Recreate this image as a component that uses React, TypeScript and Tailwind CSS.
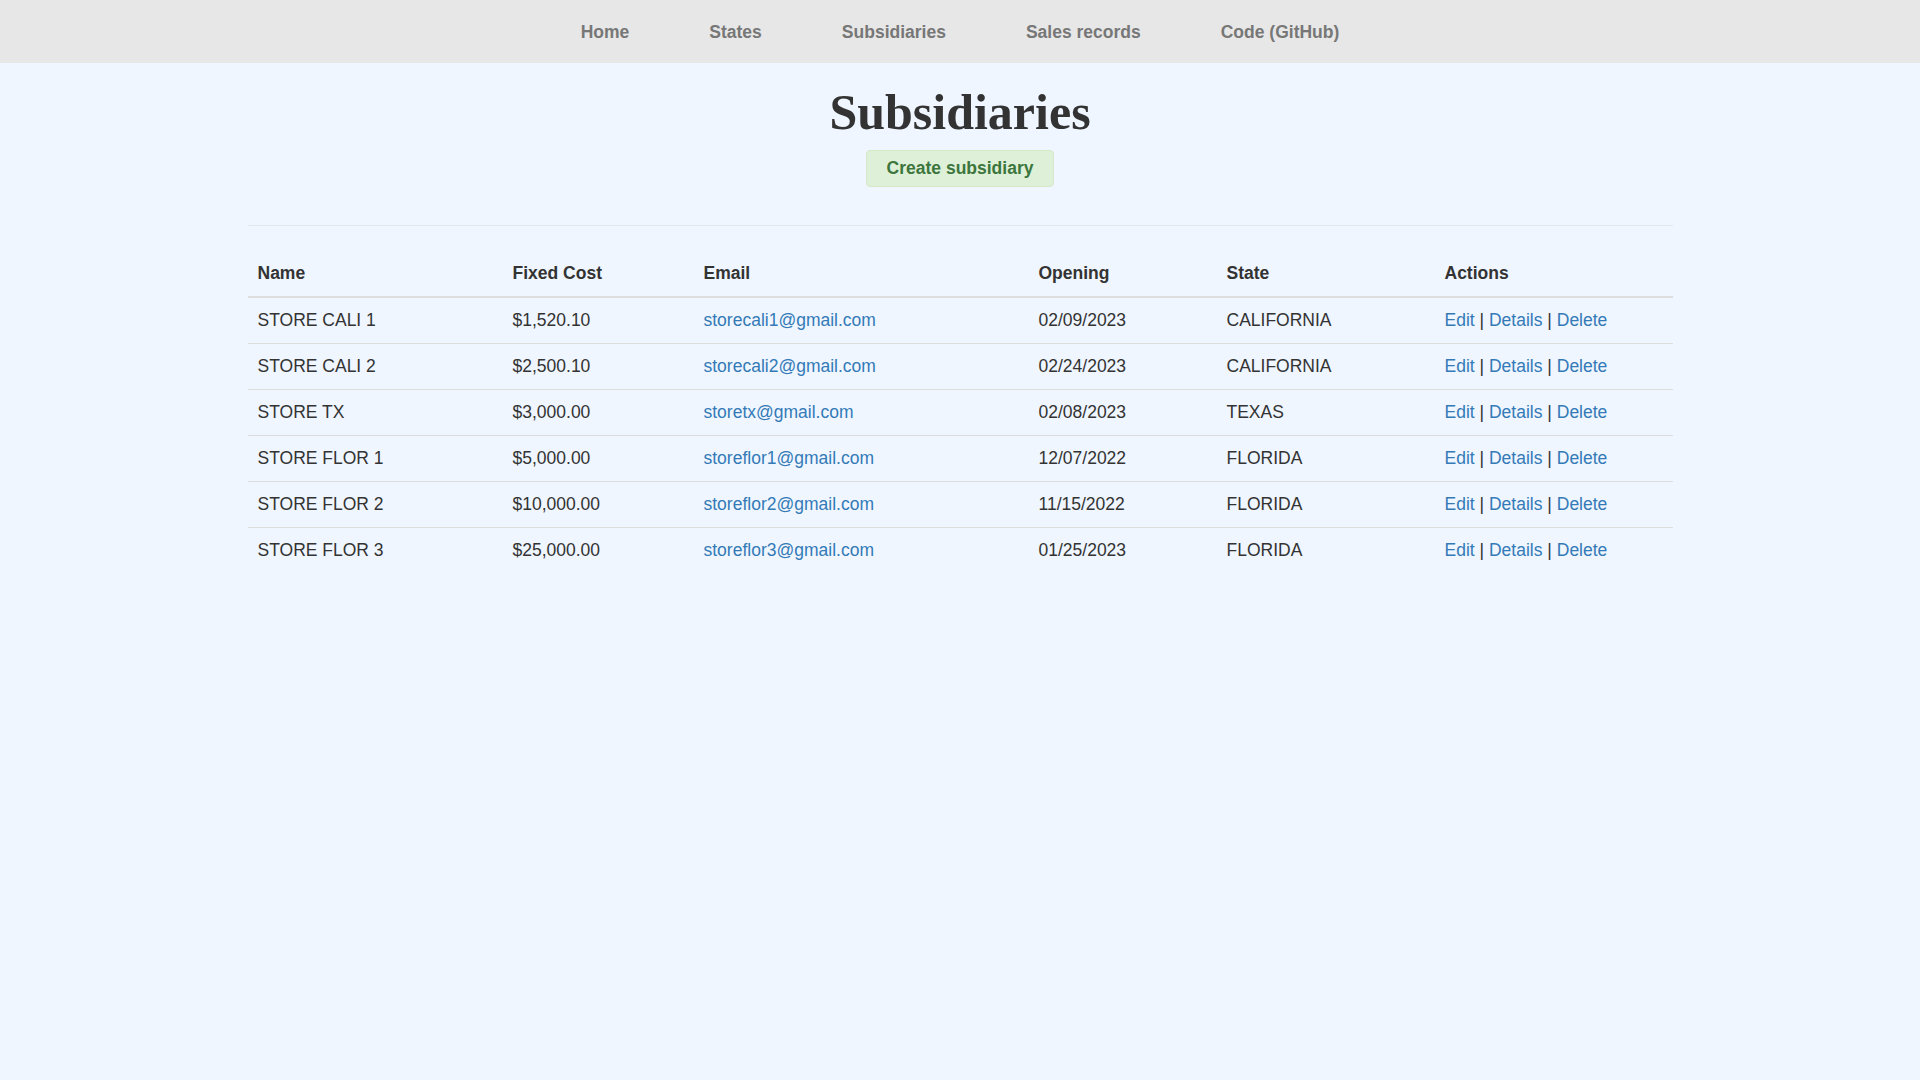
import React from 'react';

const navItems = ['Home', 'States', 'Subsidiaries', 'Sales records', 'Code (GitHub)'];

const rows = [
  { name: 'STORE CALI 1', cost: '$1,520.10', email: 'storecali1@gmail.com', opening: '02/09/2023', state: 'CALIFORNIA' },
  { name: 'STORE CALI 2', cost: '$2,500.10', email: 'storecali2@gmail.com', opening: '02/24/2023', state: 'CALIFORNIA' },
  { name: 'STORE TX', cost: '$3,000.00', email: 'storetx@gmail.com', opening: '02/08/2023', state: 'TEXAS' },
  { name: 'STORE FLOR 1', cost: '$5,000.00', email: 'storeflor1@gmail.com', opening: '12/07/2022', state: 'FLORIDA' },
  { name: 'STORE FLOR 2', cost: '$10,000.00', email: 'storeflor2@gmail.com', opening: '11/15/2022', state: 'FLORIDA' },
  { name: 'STORE FLOR 3', cost: '$25,000.00', email: 'storeflor3@gmail.com', opening: '01/25/2023', state: 'FLORIDA' },
];

const App = () => {
  return (
    <div className="min-h-screen bg-[#eff6ff] font-['Liberation_Sans',Arial,sans-serif] text-[#333]">
      <nav className="h-[63px] bg-[#e7e7e7] flex items-center justify-center">
        {navItems.map((item) => (
          <a key={item} href="#" className="px-10 text-[17.5px] font-bold text-[#777] leading-[24px]">
            {item}
          </a>
        ))}
      </nav>

      <main className="w-[1425px] mx-auto">
        <div className="flex flex-col items-center">
          <h1 className="mt-[22px] text-[50px] leading-[55px] font-bold font-['Liberation_Serif','Times_New_Roman',serif] text-[#333]">
            Subsidiaries
          </h1>
          <a
            href="#"
            className="mt-[10px] h-[37px] w-[188px] flex items-center justify-center rounded-[4px] border border-[#d6e9c6] bg-[#dff0d8] text-[#3c763d] text-[17.5px] font-bold"
          >
            Create subsidiary
          </a>
        </div>

        <div className="mt-[38px] border-t border-[#e3e8ec]" />

        <table className="mt-[25px] w-full table-fixed border-collapse text-[17.5px] leading-[25px]">
          <thead>
            <tr className="text-left">
              <th className="w-[255px] p-[10px] font-bold border-b-2 border-[#ddd]">Name</th>
              <th className="w-[191px] p-[10px] font-bold border-b-2 border-[#ddd]">Fixed Cost</th>
              <th className="w-[335px] p-[10px] font-bold border-b-2 border-[#ddd]">Email</th>
              <th className="w-[188px] p-[10px] font-bold border-b-2 border-[#ddd]">Opening</th>
              <th className="w-[218px] p-[10px] font-bold border-b-2 border-[#ddd]">State</th>
              <th className="p-[10px] font-bold border-b-2 border-[#ddd]">Actions</th>
            </tr>
          </thead>
          <tbody>
            {rows.map((r) => (
              <tr key={r.name} className="border-t border-[#ddd]">
                <td className="p-[10px]">{r.name}</td>
                <td className="p-[10px]">{r.cost}</td>
                <td className="p-[10px]">
                  <a href="#" className="text-[#337ab7]">{r.email}</a>
                </td>
                <td className="p-[10px]">{r.opening}</td>
                <td className="p-[10px]">{r.state}</td>
                <td className="p-[10px]">
                  <a href="#" className="text-[#337ab7]">Edit</a> |{' '}
                  <a href="#" className="text-[#337ab7]">Details</a> |{' '}
                  <a href="#" className="text-[#337ab7]">Delete</a>
                </td>
              </tr>
            ))}
          </tbody>
        </table>
      </main>
    </div>
  );
};

export default App;
